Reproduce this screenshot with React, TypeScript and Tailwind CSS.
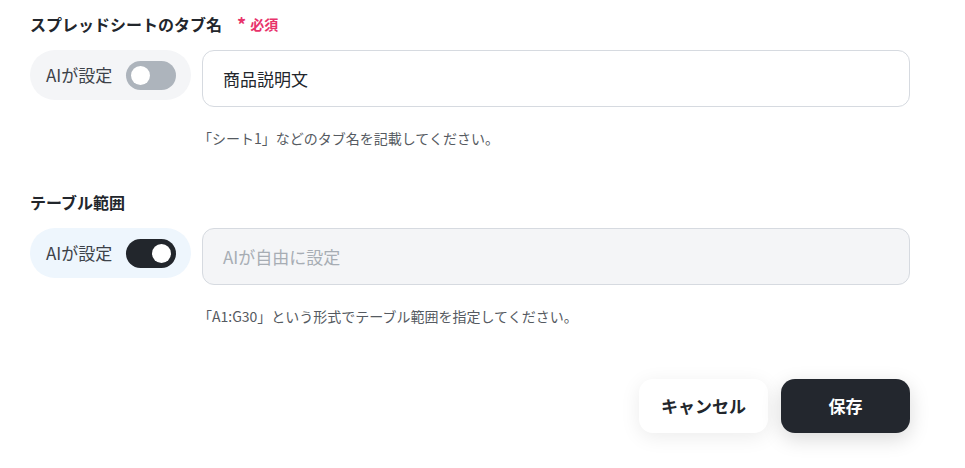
const font = { fontFamily: '"Noto Sans CJK JP", "Noto Sans", sans-serif' };

type FieldProps = {
  label: string;
  required?: boolean;
  aiOn: boolean;
  value?: string;
  placeholder?: string;
  hint: string;
};

function Toggle({ on }: { on: boolean }) {
  return (
    <div
      className={`flex h-[29px] w-[50px] items-center rounded-full px-[5px] ${
        on ? "justify-end bg-[#22262c]" : "justify-start bg-[#adb4bc]"
      }`}
    >
      <div className="h-[19px] w-[19px] rounded-full bg-white" />
    </div>
  );
}

function Field({ label, required, aiOn, value, placeholder, hint }: FieldProps) {
  return (
    <div>
      <div className="flex h-[22px] items-center gap-[15px]">
        <span className="text-[16px] font-bold text-[#22262c]">{label}</span>
        {required && (
          <span className="flex items-center gap-[4px] text-[14px] font-bold text-[#e8336b]">
            <span className="text-[18px] leading-none">*</span>必須
          </span>
        )}
      </div>
      <div className="mt-[15px] flex items-start gap-[11px]">
        <div
          className={`flex h-[50px] w-[161px] shrink-0 items-center gap-[14px] rounded-full pl-[16px] ${
            aiOn ? "bg-[#eef6fd]" : "bg-[#f4f5f7]"
          }`}
        >
          <span className="text-[17px] text-[#3d4249]">AIが設定</span>
          <Toggle on={aiOn} />
        </div>
        <div
          className={`flex h-[57px] flex-1 items-center rounded-[12px] border px-[20px] text-[17px] ${
            aiOn
              ? "border-[#d6dae0] bg-[#f4f5f7] text-[#a7adb4]"
              : "border-[#d6dae0] bg-white text-[#22262c]"
          }`}
        >
          {value ?? placeholder}
        </div>
      </div>
      <p className="ml-[168px] mt-[21px] text-[14px] leading-[20px] text-[#555a61]">{hint}</p>
    </div>
  );
}

export default function App() {
  return (
    <div className="h-[468px] w-[965px] bg-white pl-[30px] pr-[55px] pt-[13px]" style={font}>
      <Field
        label="スプレッドシートのタブ名"
        required
        aiOn={false}
        value="商品説明文"
        hint="「シート1」などのタブ名を記載してください。"
      />
      <div className="mt-[43px]">
        <Field
          label="テーブル範囲"
          aiOn
          placeholder="AIが自由に設定"
          hint="「A1:G30」という形式でテーブル範囲を指定してください。"
        />
      </div>
      <div className="mt-[53px] flex justify-end gap-[13px]">
        <button className="h-[54px] w-[129px] rounded-[14px] bg-white text-[17px] font-bold text-[#22262c] shadow-[0_4px_20px_rgba(0,0,0,0.08)]">
          キャンセル
        </button>
        <button className="h-[54px] w-[129px] rounded-[14px] bg-[#23272e] text-[17px] font-bold text-white shadow-[0_6px_20px_rgba(0,0,0,0.15)]">
          保存
        </button>
      </div>
    </div>
  );
}
